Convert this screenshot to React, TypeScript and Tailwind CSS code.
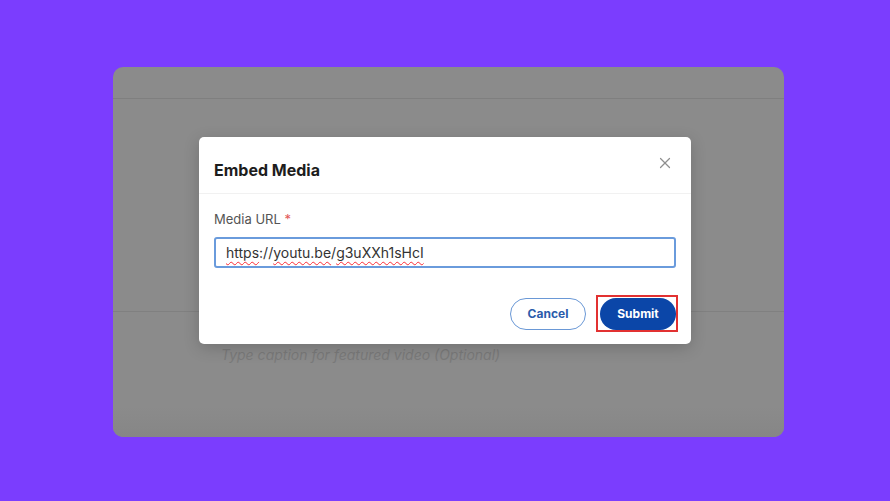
import { X } from 'lucide-react';

const FONT = { fontFamily: 'Inter, "Noto Sans", sans-serif' };

const Squiggle = ({ children }: { children: string }) => (
  <span className="underline decoration-wavy decoration-red-500 decoration-1 underline-offset-[3px]">{children}</span>
);

const EmbedMediaModal = () => (
  <div className="absolute left-[86px] top-[70px] w-[492px] rounded-[5px] bg-white shadow-[0_4px_16px_rgba(0,0,0,0.18)]">
    <div className="flex items-start justify-between border-b border-[#f1f1f1] px-[15px] pt-[23px] pb-[13px]">
      <h2 className="text-[16px] font-bold leading-5 text-[#1d1d1d]">Embed Media</h2>
      <X className="-mt-[6px] mr-[2px] h-[18px] w-[18px] text-[#8f8f8f]" strokeWidth={1.6} />
    </div>

    <div className="px-[15px] pt-[17px] pb-[14px]">
      <label className="block text-[13px] leading-4 text-[#555]">
        Media URL <span className="text-[#e25757]">*</span>
      </label>

      <div className="mt-[10px] flex h-[31px] items-center rounded-[3px] border-2 border-[#6a9bdc] px-[10px] text-[14px] text-[#333]">
        <Squiggle>https</Squiggle>://<Squiggle>youtu.be</Squiggle>/<Squiggle>g3uXXh1sHcI</Squiggle>
      </div>

      <div className="mt-[30px] flex justify-end gap-[14px]">
        <button className="h-[32px] w-[76px] rounded-full border-[1.5px] border-[#6a98d6] text-[12px] font-bold text-[#2b5cab]">
          Cancel
        </button>
        <div className="relative">
          <button className="h-[32px] w-[76px] rounded-full bg-[#0b46a8] text-[12px] font-bold text-white">
            Submit
          </button>
          <span className="pointer-events-none absolute -left-[4px] -right-[2px] -top-[3px] -bottom-[2px] border-2 border-[#e23131]" />
        </div>
      </div>
    </div>
  </div>
);

export default function App() {
  return (
    <div className="h-[501px] w-[890px] bg-[#7b3dfe] pl-[113px] pt-[67px]" style={FONT}>
      <div className="relative flex h-[370px] w-[671px] flex-col overflow-hidden rounded-[10px] bg-[#8b8b8b]">
        <div className="h-[32px] border-b border-[#7f7f7f]" />
        <div className="h-[213px] border-b border-[#808080]" />
        <p className="pl-[108px] pt-[32px] text-[14px] italic text-[#7a7a7a]">
          Type caption for featured video (Optional)
        </p>
        <div className="mt-auto h-[30px] bg-gradient-to-b from-[#8b8b8b] to-[#868686]" />

        <EmbedMediaModal />
      </div>
    </div>
  );
}
